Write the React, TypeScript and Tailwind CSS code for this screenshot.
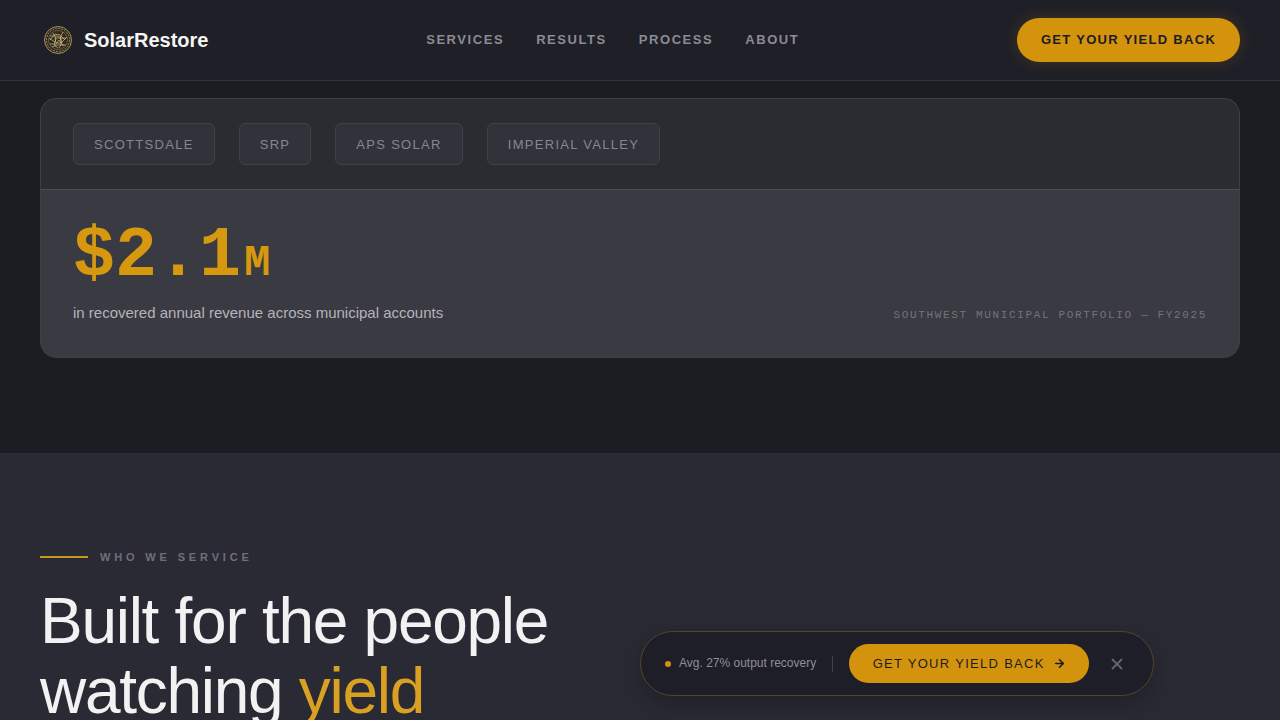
import { ArrowRight, X } from "lucide-react"

const tags = ["SCOTTSDALE", "SRP", "APS SOLAR", "IMPERIAL VALLEY"]
const links = ["SERVICES", "RESULTS", "PROCESS", "ABOUT"]

const Logo = () => (
    <svg width="28" height="28" viewBox="0 0 28 28" fill="none" className="shrink-0">
        <circle cx="14" cy="14" r="13.5" fill="#2e2a20" stroke="#a8915f" strokeWidth="1" />
        <circle cx="14" cy="14" r="11.5" stroke="#c9a96a" strokeWidth="0.7" strokeDasharray="2 1" />
        <circle cx="14" cy="14" r="9.5" stroke="#8f7b50" strokeWidth="0.6" />
        <path d="M6 10h8l3 2h5M6 14l5-6 5 1 5 5M6 18h6l3-4 3 5h4M9 7l3 6-2 6 4 3M19 6l-3 6 2 5-3 5M8 21l5-2h7M11 12h6v5h-5zM5 12l6 4M23 11l-6 6" stroke="#d8bc82" strokeWidth="0.7" />
    </svg>
)

const App = () => {
    return (
        <div className="relative h-[720px] overflow-hidden bg-[#1c1c23] font-['Liberation_Sans',Arial,sans-serif]">
            <nav className="flex h-[81px] items-center justify-between border-b border-[#33333c] bg-[#1f1f27] pl-11 pr-10">
                <div className="flex items-center gap-3">
                    <Logo />
                    <span className="text-[20px] font-bold text-[#f5f5f5]">SolarRestore</span>
                </div>
                <div className="flex gap-8">
                    {links.map((link) => (
                        <a key={link} className="text-[13px] font-bold tracking-[0.12em] text-[#8b8b93]">{link}</a>
                    ))}
                </div>
                <button className="h-11 w-[223px] rounded-full bg-[#d4930d] text-[13px] font-bold tracking-[0.1em] text-[#1c1c22] shadow-[0_0_16px_rgba(212,147,13,0.2)]">
                    GET YOUR YIELD BACK
                </button>
            </nav>

            <main className="h-[372px] px-10 pt-[17px]">
                <div className="h-[260px] overflow-hidden rounded-2xl border border-[#3f3f48] bg-[#2b2c32]">
                    <div className="flex h-[91px] gap-6 border-b border-[#4c4c55] px-8 pt-6">
                        {tags.map((tag) => (
                            <span key={tag} className="flex h-[42px] items-center rounded-md border border-[#3f3f48] bg-[#32323b] px-5 pt-0.5 text-[13px] tracking-[0.1em] text-[#86868e]">{tag}</span>
                        ))}
                    </div>
                    <div className="flex h-[168px] items-start justify-between bg-[#3a3a42] px-8 pt-[24px]">
                        <div>
                            <div className="mt-[3px] flex items-baseline font-['Liberation_Mono',monospace] font-bold leading-[80px] text-[#d6980f]">
                                <span className="text-[70px]">$2.1</span>
                                <span className="ml-[3px] text-[44px]">M</span>
                            </div>
                            <p className="-mt-px text-[15px] text-[#b4b4ba]">in recovered annual revenue across municipal accounts</p>
                        </div>
                        <p className="mt-[93px] font-['Liberation_Mono',monospace] text-[11px] tracking-[0.15em] text-[#73737b]">SOUTHWEST MUNICIPAL PORTFOLIO — FY2025</p>
                    </div>
                </div>
            </main>

            <section className="h-[267px] border-t border-[#2e2e39] bg-[#2a2a35] px-10 pt-[95px]">
                <div className="flex items-center gap-3">
                    <span className="h-0.5 w-12 bg-[#c9961f]" />
                    <span className="text-[11px] font-bold tracking-[0.35em] text-[#6f6f78]">WHO WE SERVICE</span>
                </div>
                <h2 className="mt-5 text-[64px] font-normal leading-[70px] tracking-[-0.02em] text-[#f2f2f2]">
                    Built for the people<br />watching <span className="text-[#d9a021]">yield</span>
                </h2>
            </section>

            <div className="absolute left-[640px] top-[631px] flex h-[65px] w-[514px] items-center rounded-full border border-[#524629] bg-[#1e1e28] pl-6 shadow-[0_8px_24px_rgba(0,0,0,0.25)]">
                <span className="h-1.5 w-1.5 rounded-full bg-[#d4930d]" />
                <span className="ml-2 pb-0.5 text-xs text-[#8f8f96]">Avg. 27% output recovery</span>
                <span className="ml-4 h-4 w-px bg-[#3f3f48]" />
                <button className="ml-4 flex h-[39px] w-[240px] items-center justify-center gap-2 rounded-full bg-[#d4930d] text-[13px] tracking-[0.1em] text-[#1c1c22]">
                    GET YOUR YIELD BACK
                    <ArrowRight size={13} strokeWidth={3} />
                </button>
                <X size={18} strokeWidth={2.4} className="ml-[19px] text-[#64646d]" />
            </div>
        </div>
    )
}
export default App
